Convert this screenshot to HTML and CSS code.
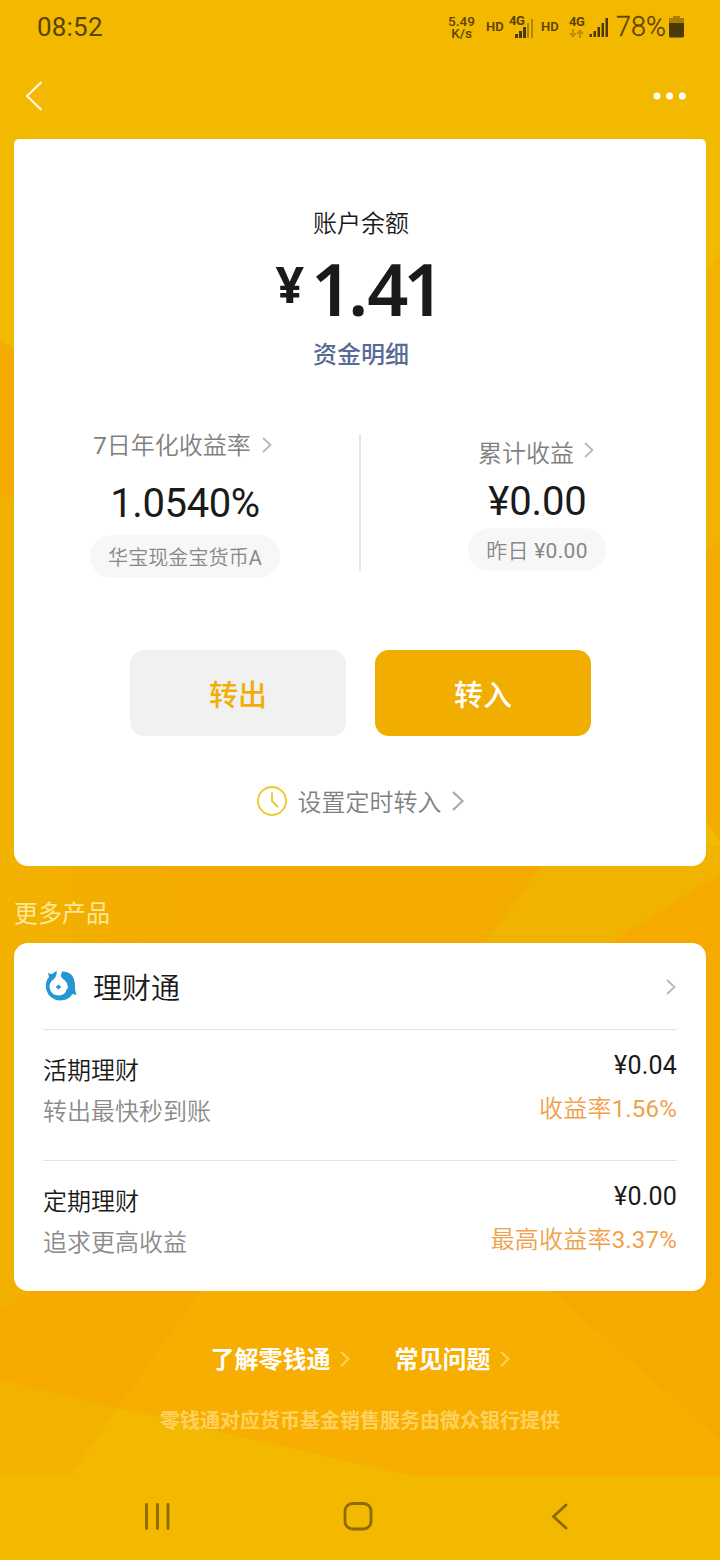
FILE: index.html
```html
<!DOCTYPE html>
<html lang="zh-CN">
<head>
<meta charset="utf-8">
<title>零钱通</title>
<link rel="stylesheet" href="styles.css">
</head>
<body>
<div class="screen">
  <svg class="backdrop" viewBox="0 0 720 1560" aria-hidden="true">
    <defs>
      <linearGradient id="band" x1="0" x2="1" y1="0" y2="0"><stop offset="0" stop-color="#f2b200"/><stop offset=".3" stop-color="#f3ab00"/></linearGradient>
    </defs>
    <path fill="#f3b900" d="M0 0h720v1560H0z"/>
    <path fill="#f4ac00" d="M0 340 60 380V520L0 495z"/>
    <path fill="#f2b000" d="M0 495l60 25V1280L0 1310z"/>
    <path fill="#f3b200" d="M720 255 690 290V800h30z"/>
    <path fill="#f4ac00" d="M720 540 690 560V800l30 40z"/>
    <path fill="url(#band)" d="M0 850h570L450 990H14V943H0z"/>
    <path fill="#f0b300" d="M556 846h164v34L600 950 485 943z"/>
    <path fill="#f6aa00" d="M720 874V1480H430L118 1408 0 1380V1310L60 1273 600 949z"/>
    <path fill="#f8ae00" d="M205 1285H545L720 1440v36H410L118 1408z"/>
    <path fill="#f3b100" d="M0 1380l118 28-48 68H0z"/>
    <path fill="#f3b900" d="M118 1408l292 68H70z"/>
  </svg>

  <header class="status">
    <span class="clock">08:52</span>
    <div class="status-icons">
      <div class="speed"><span>5.49</span><span>K/s</span></div>
      <span class="hd">HD</span>
      <span class="net net-a">
        <span class="gen">4G</span>
        <svg class="bars" viewBox="0 0 20 20"><path d="M1 16h3v4H1zM5 13h3v7H5zM9 9h3v11H9z"/><path opacity=".4" d="M13 5h2v15h-2zM17 1h2v19h-2z"/></svg>
      </span>
      <span class="hd hd-b">HD</span>
      <span class="net net-b">
        <span class="gen">4G</span>
        <svg class="arrows" viewBox="0 0 15 9"><path d="M4 0v7M1 4l3 3.400L7 4M11 9V2M8 5l3-3.400L14 5"/></svg>
      </span>
      <svg class="bars" viewBox="0 0 20 20"><path d="M.5 17H3v3H.500zM4.500 14H7v6H4.500zM8.500 10H11v10H8.500zM12.500 6H15v14h-2.500zM16.500 1H19v19h-2.500z"/></svg>
      <span class="percent">78%</span>
      <svg class="battery" viewBox="0 0 15 22"><path opacity=".45" d="M4 0h7v2h4v5H0V2h4z"/><path d="M0 7h15v13q0 1.500-1.500 1.500h-12Q0 21.500 0 20z"/></svg>
    </div>
  </header>

  <nav class="appbar">
    <svg class="back" viewBox="0 0 18 32"><path d="M16.500 2 2 16l14.500 14"/></svg>
    <svg class="more" viewBox="0 0 34 8"><circle cx="4" cy="4" r="3.500"/><circle cx="16.600" cy="4" r="3.500"/><circle cx="29.300" cy="4" r="3.500"/></svg>
  </nav>

  <main>
    <section class="card balance">
      <div class="label">账户余额</div>
      <div class="amount"><span class="yen">¥</span><span class="figure"><span class="k1">1</span><span class="k2">.</span><span class="k3">4</span>1</span></div>
      <a class="details">资金明细</a>
      <div class="metrics">
        <div class="metric rate">
          <div class="metric-name"><span><b>7</b>日年化收益率</span><svg class="chev" viewBox="0 0 10 16"><path d="M1 1l7.500 7L1 15"/></svg></div>
          <div class="metric-value">1.0540%</div>
          <div class="pill">华宝现金宝货币<b>A</b></div>
        </div>
        <div class="metric profit">
          <div class="metric-name">累计收益<svg class="chev" viewBox="0 0 10 16"><path d="M1 1l7.500 7L1 15"/></svg></div>
          <div class="metric-value">¥0.00</div>
          <div class="pill">昨日 <b>¥0.00</b></div>
        </div>
      </div>
      <div class="buttons">
        <div class="btn out">转出</div>
        <div class="btn in">转入</div>
      </div>
      <div class="schedule">
        <svg class="timer" viewBox="0 0 32 32"><circle cx="16" cy="16" r="14"/><path d="M16 7.500v8.500l6 6"/></svg>
        <span>设置定时转入</span>
        <svg class="chev-lg" viewBox="0 0 13 20"><path d="M1 1l9.500 9L1 19"/></svg>
      </div>
    </section>

    <h2 class="more-title">更多产品</h2>

    <section class="card products">
      <div class="brand">
        <svg class="logo" viewBox="0 0 32 32">
          <path fill="#2496d3" d="M3 2.500Q5 4.500 7 4L11.500 1 17 4 16.500 1.500Q29.500 1 30 15.500 29.500 20 31.500 25L27.500 24Q23.500 30.500 15.500 30.500 4 30 1 19 0 11 4 7z"/>
          <path fill="#fff" d="M11.500 0Q12.500 5.500 9 9 4 12.500 4.500 17.500 6 25.500 14 25.500 20.500 25 21.500 19.500L23 18Q22.500 11.500 18 9 14.500 6 16.500 1z"/>
          <path fill="#2496d3" d="M13.500 14.500 16.200 17l-2.700 2.500L10.800 17z"/>
        </svg>
        <span>理财通</span>
        <svg class="chev" viewBox="0 0 10 16"><path d="M1 1l7.500 7L1 15"/></svg>
      </div>
      <div class="product">
        <div><div class="name">活期理财</div><div class="desc">转出最快秒到账</div></div>
        <div class="right"><div class="sum">¥0.04</div><div class="yield">收益率<b>1.56%</b></div></div>
      </div>
      <div class="product">
        <div><div class="name">定期理财</div><div class="desc">追求更高收益</div></div>
        <div class="right"><div class="sum">¥0.00</div><div class="yield">最高收益率<b>3.37%</b></div></div>
      </div>
    </section>
  </main>

  <footer class="foot">
    <div class="links">
      <a>了解零钱通<svg class="chev" viewBox="0 0 10 16"><path d="M1 1l7.500 7L1 15"/></svg></a>
      <a>常见问题<svg class="chev" viewBox="0 0 10 16"><path d="M1 1l7.500 7L1 15"/></svg></a>
    </div>
    <p class="notice">零钱通对应货币基金销售服务由微众银行提供</p>
  </footer>

  <div class="sysnav">
    <svg viewBox="0 0 30 30"><path d="M4.500 3.500v24M15.500 3.500v24M26 3.500v24"/></svg>
    <svg viewBox="0 0 30 30"><rect x="2" y="2.500" width="26" height="25.500" rx="7.500"/></svg>
    <svg viewBox="0 0 30 30"><path d="M22 4 9.500 15.500 22 27"/></svg>
  </div>
</div>
</body>
</html>
```
FILE: styles.css
```css
* { box-sizing: border-box; }
body {
  margin: 0;
  font-family: Roboto, "Noto Sans CJK SC", sans-serif;
  color: #1a1a1a;
}
/* latin characters set inside lighter chinese text */
b { font-weight: 400; }
svg { display: block; flex: none; fill: none; }
.screen {
  position: relative;
  width: 720px;
  height: 1560px;
  display: flex;
  flex-direction: column;
  overflow: hidden;
  isolation: isolate;
}
.backdrop { position: absolute; inset: 0; width: 720px; height: 1560px; z-index: -1; }

.status {
  height: 54px;
  padding: 0 36px 0 37px;
  display: flex;
  justify-content: space-between;
  align-items: center;
  color: #5b4300;
}
.clock { font-size: 26px; letter-spacing: .2px; }
.status-icons { display: flex; align-items: center; }
.status svg { fill: #4b3a05; }
.speed { display: flex; flex-direction: column; align-items: center; font-size: 13.500px; line-height: 12.500px; font-weight: 500; width: 29px; }
.hd { font-size: 13px; font-weight: 600; margin-left: 10px; width: 18px; margin-top: -1px; }
.hd-b { margin-left: 7px; }
.gen { font-size: 13px; line-height: 12px; font-weight: 700; letter-spacing: -.5px; }
.net { display: flex; flex-direction: column; }
.net-a { margin-left: 5px; width: 25px; height: 22px; align-items: flex-end; }
.net-a .gen { align-self: flex-start; height: 2px; line-height: 10px; }
.net-b { margin: 0 4px 0 10px; width: 16px; }
.bars { width: 20px; height: 20px; }
.arrows { width: 15px; height: 9px; margin-top: 1px; }
.status .arrows { fill: none; stroke: #b98c00; stroke-width: 1.800; }
.percent { font-size: 27px; font-weight: 300; margin-left: 7px; width: 53px; -webkit-text-stroke: .3px; }
.battery { width: 15px; height: 22px; }

.appbar {
  height: 85px;
  padding: 0 33px 2px 25px;
  display: flex;
  justify-content: space-between;
  align-items: center;
}
.back { width: 18px; height: 32px; stroke: #fff8d8; stroke-width: 2.300; }
.more { width: 34px; height: 8px; fill: #fff; }

.card { margin: 0 14px; background: #fff; border-radius: 14px; }
.balance {
  height: 727px;
  border-radius: 5px 5px 14px 14px;
  padding-top: 67px;
  display: flex;
  flex-direction: column;
  align-items: center;
}
.label { padding-left: 2px; font-size: 24px; line-height: 36px; font-weight: 350; }
.amount {
  height: 94px;
  display: flex;
  font-family: "Noto Sans", sans-serif;
  font-size: 72px;
  line-height: 92px;
  font-weight: 600;
}
.yen { font-size: 50px; line-height: 84px; font-weight: 700; margin-right: 7px; }
.k1 { letter-spacing: -4px; }
.k2 { letter-spacing: -1px; }
.k3 { letter-spacing: -5px; }
.details { padding-left: 2px; font-size: 24px; line-height: 38px; font-weight: 500; color: #576b95; }
.metrics {
  width: 692px;
  height: 150px;
  margin-top: 55px;
  display: flex;
  background: linear-gradient(#e5e5e5, #e5e5e5) 345px 5px / 2px 137px no-repeat;
}
.metric { flex: 1; display: flex; flex-direction: column; align-items: center; }
.rate { padding-right: 4px; }
.profit { padding-left: 8px; }
.metric-name { display: flex; align-items: center; gap: 11px; font-size: 24px; line-height: 34px; font-weight: 350; color: #808080; }
.rate .metric-name { margin-left: -3px; }
.rate .metric-name .chev { margin-top: -2px; }
.profit .metric-name { margin-top: 8px; }
.profit .metric-name .chev { margin: -8px 0 0 -1px; }
.chev { width: 10px; height: 16px; stroke: #b8b8b8; stroke-width: 1.800; }
.metric-value { font-size: 40px; line-height: 48px; margin-top: 17px; letter-spacing: -.4px; padding-left: 2px; }
.profit .metric-value { margin-top: 7px; letter-spacing: -.1px; padding-left: 3px; }
.pill {
  height: 43px;
  line-height: 46px;
  margin-top: 7px;
  padding: 0 18px;
  border-radius: 22px;
  background: #f7f7f7;
  color: #888;
  font-size: 20px;
  font-weight: 350;
  letter-spacing: .1px;
}
.rate .pill { margin-left: 2px; }
.profit .pill { margin: 2px 0 0 2px; font-size: 21px; letter-spacing: .3px; }
.buttons { display: flex; gap: 29px; margin-top: 71px; }
.btn {
  width: 216px;
  height: 86px;
  padding-left: 1px;
  border-radius: 14px;
  font-size: 29px;
  line-height: 92px;
  font-weight: 500;
  text-align: center;
}
.out { background: #f1f1f1; color: #f2ae08; }
.in { background: #f2ae00; color: #fff; }
.schedule { display: flex; align-items: center; height: 40px; margin-top: 45px; font-size: 24px; line-height: 28px; font-weight: 350; color: #7f7f7f; }
.schedule span { margin-top: 3px; }
.timer { width: 32px; height: 32px; margin-right: 10px; stroke: #ebcb2f; stroke-width: 2; }
.chev-lg { width: 13px; height: 20px; margin-left: 10px; stroke: #aaa; stroke-width: 2.200; }

.more-title { margin: 0 14px; height: 77px; line-height: 97px; font-size: 24px; font-weight: 400; color: #ffe896; }
.products { height: 348px; padding: 0 29px; }
.brand { height: 86px; display: flex; align-items: center; font-size: 29px; font-weight: 350; }
.logo { width: 32px; height: 32px; margin: 0 16px 0 2px; }
.brand .chev { margin: 1px 1px 0 auto; }
.product { height: 131px; border-top: 1px solid #e3e3e3; padding-top: 23px; display: flex; justify-content: space-between; font-size: 24px; line-height: 36px; font-weight: 350; }
.desc { color: #8b8b8b; margin-top: 5px; }
.right { text-align: right; margin-top: -5px; }
.sum { font-size: 25px; font-weight: 400; letter-spacing: .2px; }
.yield { margin-top: 7px; color: #f0a14b; letter-spacing: .2px; }

.foot { height: 185px; padding-top: 51px; display: flex; flex-direction: column; align-items: center; }
.links { display: flex; gap: 45px; color: #fff; font-size: 24px; line-height: 36px; font-weight: 700; }
.links a { display: flex; align-items: center; gap: 10px; }
.links .chev { stroke: #ffd661; stroke-width: 1.800; margin: -2px 0 0 -1px; }
.notice { margin: 28px 0 0; font-size: 20px; line-height: 30px; font-weight: 700; color: #ffd25f; }

.sysnav { height: 84px; padding: 0 146px 4px 142px; display: flex; align-items: center; justify-content: space-between; background: #f3b900; }
.sysnav svg { width: 30px; height: 30px; stroke: #8c6a00; stroke-width: 2.800; stroke-linecap: round; }
```
